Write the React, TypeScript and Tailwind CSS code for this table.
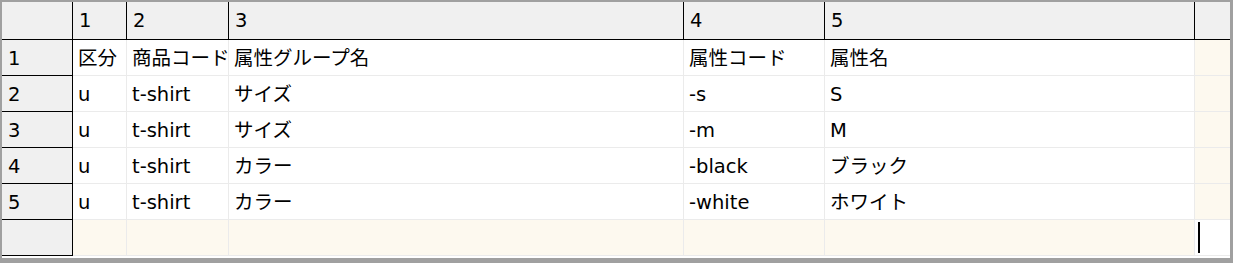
// Spreadsheet-style grid: column header strip, row header strip, data cells.

const cols = [54, 102, 455, 141, 370]

const rows: string[][] = [
  ['区分', '商品コード', '属性グループ名', '属性コード', '属性名'],
  ['u', 't-shirt', 'サイズ', '-s', 'S'],
  ['u', 't-shirt', 'サイズ', '-m', 'M'],
  ['u', 't-shirt', 'カラー', '-black', 'ブラック'],
  ['u', 't-shirt', 'カラー', '-white', 'ホワイト'],
]

const font = { fontFamily: "'DejaVu Sans', 'Noto Sans CJK JP', sans-serif" }

export default function App() {
  const template = `71px ${cols.map((c) => `${c}px`).join(' ')} 35px`

  return (
    <div className="w-[1233px] h-[263px] bg-[#a0a0a0] pt-[2px] pl-[2px] pr-[3px] pb-[5px] overflow-hidden">
      <div className="w-full h-full bg-white overflow-hidden text-[19.5px] text-black leading-none" style={font}>
        {/* column header */}
        <div className="grid h-[38px]" style={{ gridTemplateColumns: template }}>
          <div className="bg-[#f0f0f0] border-r border-b border-black" />
          {cols.map((_, i) => (
            <div key={i} className="bg-[#f0f0f0] border-r border-b border-black flex items-center pl-[6px] pt-[1px]">
              {i + 1}
            </div>
          ))}
          <div className="bg-[#f0f0f0] border-b border-black" />
        </div>

        {rows.map((r, ri) => (
          <div key={ri} className="grid h-[36px]" style={{ gridTemplateColumns: template }}>
            <div className="bg-[#f0f0f0] border-r border-b border-black flex items-center pl-[6px] pt-[3px]">
              {ri + 1}
            </div>
            {r.map((v, ci) => (
              <div key={ci} className="bg-white border-r border-b border-[#ebebeb] flex items-center pl-[5px] pt-[3px] whitespace-nowrap overflow-hidden">
                {v}
              </div>
            ))}
            <div className="bg-[#fdf9ef] border-b border-[#ebebeb]" />
          </div>
        ))}

        {/* empty input row */}
        <div className="grid h-[36px]" style={{ gridTemplateColumns: template }}>
          <div className="bg-[#f0f0f0] border-r border-b border-black" />
          {cols.map((_, i) => (
            <div key={i} className="bg-[#fdf9ef] border-r border-b border-[#ebebeb]" />
          ))}
          <div className="bg-white border-b border-[#ebebeb] flex items-center pl-[3px]">
            <div className="w-[2px] h-[31px] bg-black" />
          </div>
        </div>
      </div>
    </div>
  )
}
